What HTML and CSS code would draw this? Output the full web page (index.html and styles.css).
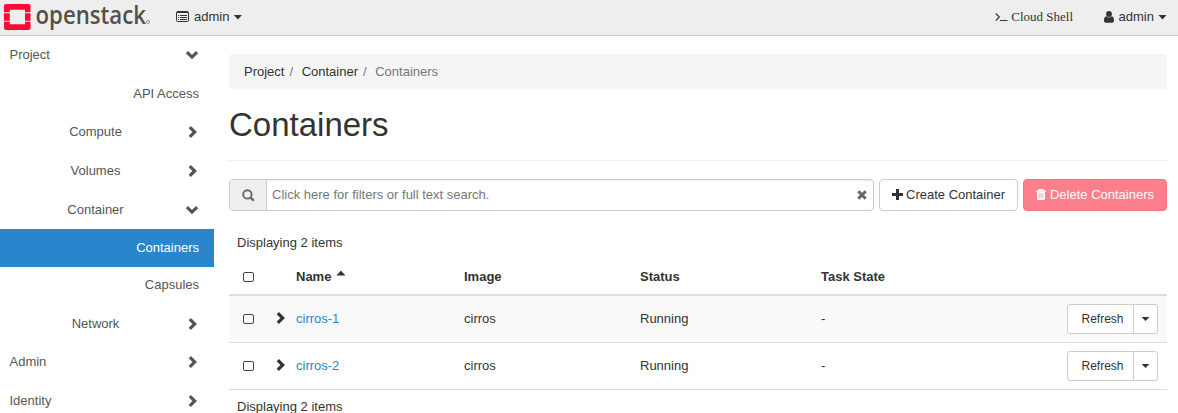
FILE: index.html
```html
<!DOCTYPE html>
<html lang="en">
<head>
<meta charset="utf-8">
<title>Containers - OpenStack Dashboard</title>
<link rel="stylesheet" href="styles.css">
</head>
<body>
<svg class="defs" aria-hidden="true">
  <symbol id="right" viewBox="0 0 10 14"><path d="M1.800 2.200 6.700 7l-4.900 4.800" fill="none" stroke="currentColor" stroke-width="3.200"/></symbol>
  <symbol id="down" viewBox="0 0 14 10"><path d="M1.900 2.200 7 7.100l5.100-4.900" fill="none" stroke="currentColor" stroke-width="3.200"/></symbol>
</svg>
<header class="topbar">
  <svg class="logo" width="152" height="35" viewBox="0 0 152 35" role="img" aria-label="openstack">
    <path fill="#ff0a36" d="M6 4h22.500a2 2 0 0 1 2 2v6.300H25V9.800H9.800v2.500H4V6a2 2 0 0 1 2-2zM4 13.300h5.800v7.400H4zM25 13.300h5.500v7.400H25zM4 21.700h5.800v2.500H25v-2.500h5.500V28a2 2 0 0 1-2 2H6a2 2 0 0 1-2-2z"/>
    <text class="wordmark" x="35.500" y="24" textLength="110.500" lengthAdjust="spacingAndGlyphs">openstack</text>
    <circle cx="148" cy="22" r="1.500" fill="none" stroke="#8a847f" stroke-width=".8"/>
  </svg>
  <div class="project-menu">
    <svg width="13" height="11" viewBox="0 0 13 11"><path fill="none" stroke="currentColor" d="M1.500.5h10a1 1 0 0 1 1 1v8a1 1 0 0 1-1 1h-10a1 1 0 0 1-1-1v-8a1 1 0 0 1 1-1z"/><path stroke="currentColor" d="M1 1.500h11M2 4.500h1M4 4.500h7M2 6.500h1M4 6.500h7M2 8.500h1M4 8.500h7"/></svg>
    <span>admin</span><i class="caret"></i>
  </div>
  <div class="shell">
    <svg width="13" height="10" viewBox="0 0 13 10"><path fill="none" stroke="currentColor" stroke-width="1.200" d="M.8 1.300 4.300 5 .8 8.700M5 8.500h7.500"/></svg>
    <span>Cloud Shell</span>
  </div>
  <div class="user-menu">
    <svg width="10" height="12" viewBox="0 0 10 12"><circle cx="5" cy="3" r="2.900" fill="currentColor"/><path fill="currentColor" d="M2.300 5.200a3.800 3.800 0 0 0 5.400 0C9.500 5.500 10 7.500 10 9.500c0 1.500-.8 2.200-2 2.200H2c-1.200 0-2-.7-2-2.200 0-2 .5-4 2.300-4.300z"/></svg>
    <span>admin</span><i class="caret"></i>
  </div>
</header>
<div class="layout">
  <nav class="sidebar">
    <a class="row h38"><span class="label">Project</span><svg class="down"><use href="#down"/></svg></a>
    <a class="row leaf">API Access</a>
    <a class="row group h38"><span class="label">Compute</span><svg class="right"><use href="#right"/></svg></a>
    <a class="row group"><span class="label">Volumes</span><svg class="right"><use href="#right"/></svg></a>
    <a class="row group"><span class="label">Container</span><svg class="down"><use href="#down"/></svg></a>
    <a class="row leaf active h38">Containers</a>
    <a class="row leaf h37">Capsules</a>
    <a class="row group"><span class="label">Network</span><svg class="right"><use href="#right"/></svg></a>
    <a class="row h38"><span class="label">Admin</span><svg class="right"><use href="#right"/></svg></a>
    <a class="row"><span class="label">Identity</span><svg class="right"><use href="#right"/></svg></a>
  </nav>
  <main class="content">
    <div class="breadcrumb"><span>Project</span><span class="sep">/</span><span>Container</span><span class="sep">/</span><span class="current">Containers</span></div>
    <h1>Containers</h1>
    <div class="toolbar">
      <div class="search">
        <span class="addon"><svg width="13" height="13" viewBox="0 0 13 13"><circle cx="5.400" cy="5.400" r="4.200" fill="none" stroke="currentColor" stroke-width="1.900"/><path d="m8.400 8.400 3.400 3.400" stroke="currentColor" stroke-width="2.300"/></svg></span>
        <span class="field">Click here for filters or full text search.</span>
        <svg class="clear" width="10" height="10" viewBox="0 0 10 10"><path d="m1.300 1.300 7.400 7.400m0-7.400L1.300 8.700" stroke="currentColor" stroke-width="3"/></svg>
      </div>
      <button class="btn create"><svg width="11" height="11" viewBox="0 0 11 11"><path d="M5.500 0v11M0 5.500h11" stroke="currentColor" stroke-width="3"/></svg>Create Container</button>
      <button class="btn delete"><svg width="10" height="11" viewBox="0 0 10 11"><path fill="none" stroke="currentColor" d="M0 2.200h10M3 2V.6h4V2" stroke-width="1.300"/><path fill="currentColor" d="M1 2.500h8v7.300Q9 11 7.800 11H2.200Q1 11 1 9.800z"/><path stroke="#fc7f8b" stroke-width=".6" d="M3.300 4v5.200M5 4v5.200M6.700 4v5.200"/></svg>Delete Containers</button>
    </div>
    <div class="count">Displaying 2 items</div>
    <div class="grid head"><i class="box"></i><span></span><span>Name<i class="caret up"></i></span><span>Image</span><span>Status</span><span>Task State</span></div>
    <div class="grid item odd"><i class="box"></i><svg class="right"><use href="#right"/></svg><a>cirros-1</a><span>cirros</span><span>Running</span><span>-</span><div class="actions"><button>Refresh</button><button class="toggle"><i class="caret small"></i></button></div></div>
    <div class="grid item"><i class="box"></i><svg class="right"><use href="#right"/></svg><a>cirros-2</a><span>cirros</span><span>Running</span><span>-</span><div class="actions"><button>Refresh</button><button class="toggle"><i class="caret small"></i></button></div></div>
    <div class="count foot">Displaying 2 items</div>
  </main>
</div>
</body>
</html>
```
FILE: styles.css
```css
* { box-sizing: border-box; }
html, body { height: 100%; }
body {
  margin: 0;
  overflow: hidden;
  background: #fff;
  color: #333;
  font: 13px/18px "Liberation Sans", Arial, sans-serif;
}
svg { display: block; flex: none; }
.defs { position: absolute; width: 0; height: 0; }
button { font: inherit; color: inherit; background: #fff; border: 1px solid #ccc; padding: 0; }

.topbar { display: flex; align-items: center; height: 36px; background: #eee; border-bottom: 1px solid #c8c8c8; padding: 0 11px 1px 0; }
.logo { align-self: flex-start; overflow: visible; }
.wordmark { font: 600 25.500px "Open Sans", sans-serif; fill: #57504a; }
.project-menu, .user-menu, .shell { display: flex; align-items: center; }
.project-menu { margin-left: 24px; gap: 5px; }
.project-menu .caret { margin-left: -1px; }
.project-menu svg { margin-bottom: 1px; }
.user-menu { margin-left: 30.500px; gap: 4px; }
.user-menu span { margin-left: 1px; }
.shell { margin-left: auto; gap: 3px; font-family: "Liberation Serif", serif; }
.caret { display: inline-block; width: 9px; height: 5px; background: currentColor; clip-path: polygon(0 0, 100% 0, 50% 100%); }
.caret.up { clip-path: polygon(50% 0, 100% 100%, 0 100%); margin-left: 5px; vertical-align: 5px; }
.caret.small { width: 8px; height: 4px; }

.layout { display: flex; }
.sidebar { width: 214px; flex: none; color: #555; }
.row { display: flex; align-items: center; justify-content: space-between; height: 39px; padding: 0 15px 0 9.500px; }
.row.h38 { height: 38px; }
.row.h37 { height: 37px; padding-bottom: 1px; }
.row.leaf { justify-content: flex-end; }
.row.active { background: #2a86cc; color: #fff; }
.row.group .label { width: 172px; text-align: center; }
.right { width: 10px; height: 14px; }
.down { width: 14px; height: 10px; }
.row .right { margin-right: 1px; }

.content { flex: none; width: 938px; margin-left: 15px; padding-top: 18px; }
.breadcrumb { display: flex; height: 35px; align-items: center; padding: 0 15px; background: #f5f5f5; border-radius: 4px; }
.sep { width: 17.200px; padding-left: 5px; color: #777; }
.current { color: #777; }
h1 { margin: 0 0 18px; height: 72px; padding-top: 17px; border-bottom: 1px solid #eee; font-size: 33px; line-height: 38px; font-weight: 400; }
.toolbar { display: flex; gap: 5px; height: 32px; }
.search { display: flex; align-items: center; width: 645px; border: 1px solid #ccc; border-radius: 4px; overflow: hidden; box-shadow: inset 0 1px 1px rgba(0, 0, 0, .08); color: #777; }
.addon { display: grid; place-items: center; width: 37px; height: 30px; background: #eee; border-right: 1px solid #ccc; color: #666; }
.field { flex: 1; padding-left: 5px; }
.clear { margin-right: 6px; color: #666; }
.btn { display: flex; align-items: center; justify-content: center; gap: 3px; border-radius: 4px; }
.btn svg { margin-bottom: 2px; }
.create { width: 139px; }
.delete { width: 144px; gap: 4px; background: #fc7f8b; border-color: #f87381; color: #fff; }
.count { padding: 23px 8px 0; height: 48px; }
.count.foot { padding-top: 8px; height: 24px; }
.grid { display: grid; grid-template-columns: 39px 20px 168px 176px 181px 246px 91px; align-items: center; padding-left: 8px; }
.head { height: 37px; border-bottom: 2px solid #ddd; font-weight: 700; }
.item { height: 47px; border-bottom: 1px solid #ddd; }
.item.odd { background: #f9f9f9; }
.item a { color: #2a86cc; }
.item .right { margin-bottom: 2px; }
.box { width: 11px; height: 10px; margin-left: 6px; border: 1px solid #444; border-radius: 2px; }
.actions { display: flex; width: 91px; }
.actions button { width: 67px; height: 30px; font-size: 12px; border-radius: 3px 0 0 3px; padding-left: 4px; }
.actions .toggle { width: 25px; margin-left: -1px; padding: 0; border-radius: 0 3px 3px 0; display: grid; place-items: center; }
```
